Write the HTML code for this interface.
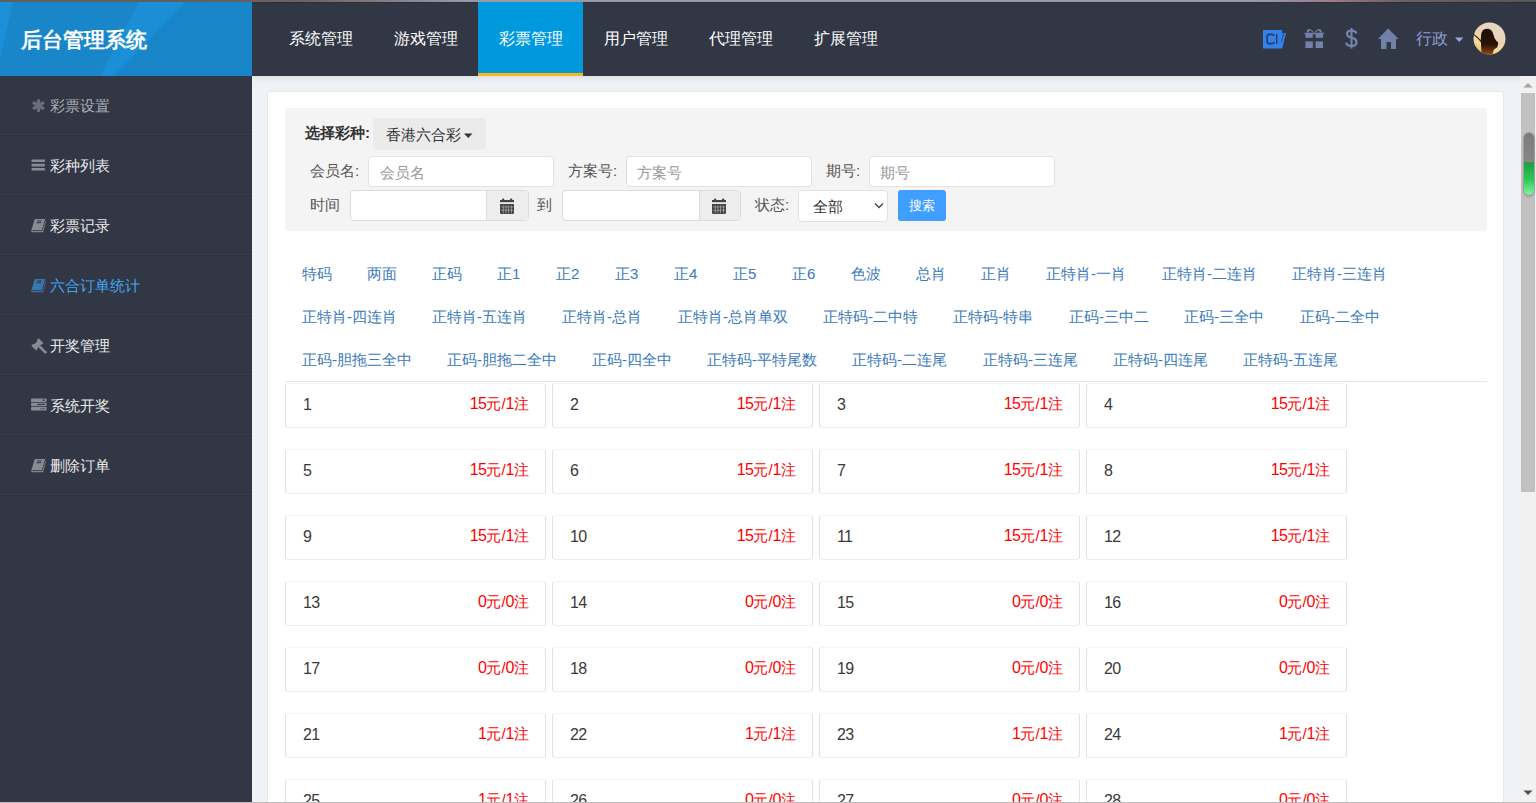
<!DOCTYPE html><html><head><meta charset="utf-8">
<style>
*{box-sizing:border-box;margin:0;padding:0}
html,body{width:1536px;height:803px;overflow:hidden}
body{position:relative;font-family:"Liberation Sans",sans-serif;background:#eff2f7;color:#333}
.abs{position:absolute}
#topline{left:0;top:0;width:1536px;height:2px;background:linear-gradient(90deg,#5f5f5f 0%,#5f5f5f 13%,#6e6262 20%,#9599a8 30%,#9599a8 82%,#a07888 87%,#6c6064 91%,#575757 100%)}
#header{left:0;top:2px;width:1536px;height:74px;background:#323745;box-shadow:inset 0 1px 0 #2c303d}
#logo{left:0;top:2px;width:252px;height:74px;background:#1986c9}
#logo span{position:absolute;left:21px;top:23px;font-size:21px;font-weight:bold;color:#fff;line-height:30px}
.nav{top:2px;height:74px;width:105px;text-align:center;color:#fff;font-size:16px;line-height:72px;padding-top:1px}
.nav.on{background:#0099dd;border-bottom:3px solid #fdb51c}
#sidebar{left:0;top:76px;width:252px;height:727px;background:#323745}
.si{left:0;width:252px;height:60px;border-bottom:1px solid #2c303c;box-shadow:inset 0 -1px 0 #3a3f4d}
.si .t{position:absolute;left:50px;top:20px;font-size:15px;line-height:20px;color:#eee}
.si .ic{position:absolute;left:31px;top:23px;width:15px;height:15px}
#content{left:252px;top:76px;width:1268px;height:727px;background:#eff2f7;overflow:hidden}
#shadow{left:252px;top:76px;width:1268px;height:6px;background:linear-gradient(#dfe2e7,rgba(239,242,247,0))}
#card{left:267px;top:91px;width:1237px;height:760px;background:#fff;border:1px solid #e3e6ea;border-radius:3px}
#filter{left:285px;top:108px;width:1202px;height:123px;background:#f4f4f4;border-radius:4px}
.lbl{font-size:15px;color:#555;line-height:20px}
.inp{background:#fff;border:1px solid #e2e2e2;border-radius:4px;height:31px}
.ph{font-size:15px;color:#999;line-height:20px}
.tab{font-size:15px;color:#3a79bb;line-height:20px;white-space:nowrap}
#hr{left:285px;top:381px;width:1202px;height:1px;background:#e6e6e6}
.cell{width:261px;height:45px;background:#fff;border:1px solid;border-color:#f4f4f4 #e1e1e1 #ededed #e1e1e1;border-radius:3px}
.cell .n{position:absolute;left:17px;top:11px;font-size:16px;letter-spacing:-0.7px;color:#3a3a3a;line-height:20px}
.cell .p i{font-style:normal;font-size:16px;letter-spacing:-0.5px}
.cell .p{position:absolute;right:16px;top:10px;font-size:15px;color:#f00;line-height:20px}
#sb{left:1520px;top:76px;width:16px;height:727px;background:#f1f1f1}
#thumb{left:1521px;top:93px;width:14px;height:399px;background:#c1c1c1}
#botline{left:0;top:802px;width:1536px;height:1px;background:#bcbcbc}
</style></head><body>
<div id="topline" class="abs"></div>
<div id="header" class="abs"></div>
<div id="logo" class="abs"><svg width="252" height="74" style="position:absolute;left:0;top:0"><rect width="252" height="74" fill="#1986c9"></rect><polygon points="0,0 13,0 0,58" fill="#1a90d6"></polygon><polygon points="139,0 186,0 114,74 100,74" fill="#1a8fd5"></polygon><polygon points="186,0 252,0 252,74 114,74" fill="#1885c8"></polygon></svg><span style="width: 126px; white-space: nowrap; text-align-last: justify; text-align: justify;">后台管理系统</span></div>
<div class="abs nav" style="left:268px"><span class="jt" style="display: inline-block; width: 64px; white-space: nowrap; text-align-last: justify; text-align: justify;">系统管理</span></div>
<div class="abs nav" style="left:373px"><span class="jt" style="display: inline-block; width: 64px; white-space: nowrap; text-align-last: justify; text-align: justify;">游戏管理</span></div>
<div class="abs nav on" style="left:478px"><span class="jt" style="display: inline-block; width: 64px; white-space: nowrap; text-align-last: justify; text-align: justify;">彩票管理</span></div>
<div class="abs nav" style="left:583px"><span class="jt" style="display: inline-block; width: 64px; white-space: nowrap; text-align-last: justify; text-align: justify;">用户管理</span></div>
<div class="abs nav" style="left:688px"><span class="jt" style="display: inline-block; width: 64px; white-space: nowrap; text-align-last: justify; text-align: justify;">代理管理</span></div>
<div class="abs nav" style="left:793px"><span class="jt" style="display: inline-block; width: 64px; white-space: nowrap; text-align-last: justify; text-align: justify;">扩展管理</span></div>

<div id="sidebar" class="abs"></div>
<div id="content" class="abs"></div>
<div class="abs si" style="top:76px"><svg class="abs" style="left:31px;top:22px" width="15" height="15" viewBox="0 0 15 15"><g stroke="#6b6f7b" stroke-width="3.3" stroke-linecap="round"><line x1="7.5" y1="2.6" x2="7.5" y2="12.6"></line><line x1="3.2" y1="5.1" x2="11.8" y2="10.1"></line><line x1="3.2" y1="10.1" x2="11.8" y2="5.1"></line></g></svg><span class="t" style="color: rgb(169, 172, 180); width: 60px; white-space: nowrap; text-align-last: justify; text-align: justify;">彩票设置</span></div>
<div class="abs si" style="top:136px"><svg class="abs" style="left:31px;top:23px" width="15" height="13" viewBox="0 0 15 13"><g fill="#888b94"><rect x="0.5" y="0.5" width="13.5" height="2.6" rx="0.8"></rect><rect x="0.5" y="4.8" width="13.5" height="2.6" rx="0.8"></rect><rect x="0.5" y="9" width="13.5" height="2.6" rx="0.8"></rect></g></svg><span class="t" style="color: rgb(233, 233, 234); width: 60px; white-space: nowrap; text-align-last: justify; text-align: justify;">彩种列表</span></div>
<div class="abs si" style="top:196px"><svg class="abs" style="left:31px;top:22px" width="16" height="16" viewBox="0 0 16 16"><path fill="#888b94" d="M4.6 0.9 H13.4 Q14.2 0.9 14 1.8 L13.9 2.6 L14.9 3.2 L12.4 13.6 Q12.2 14.3 11.6 14.3 H1.4 Q0 14.1 0.3 12.6 L3.4 1.9 Q3.7 0.9 4.6 0.9 Z"></path><path d="M1.4 12.6 H11.3 M13.9 2.6 L11.3 12.6" stroke="#323745" stroke-width="0.9" fill="none"></path><path d="M5.9 2.9 H10.6 M5.5 4.7 H10.2" stroke="#323745" stroke-width="1" fill="none"></path></svg><span class="t" style="color: rgb(233, 233, 234); width: 60px; white-space: nowrap; text-align-last: justify; text-align: justify;">彩票记录</span></div>
<div class="abs si" style="top:256px"><svg class="abs" style="left:31px;top:22px" width="16" height="16" viewBox="0 0 16 16"><path fill="#3878ad" d="M4.6 0.9 H13.4 Q14.2 0.9 14 1.8 L13.9 2.6 L14.9 3.2 L12.4 13.6 Q12.2 14.3 11.6 14.3 H1.4 Q0 14.1 0.3 12.6 L3.4 1.9 Q3.7 0.9 4.6 0.9 Z"></path><path d="M1.4 12.6 H11.3 M13.9 2.6 L11.3 12.6" stroke="#323745" stroke-width="0.9" fill="none"></path><path d="M5.9 2.9 H10.6 M5.5 4.7 H10.2" stroke="#323745" stroke-width="1" fill="none"></path></svg><span class="t" style="color: rgb(63, 166, 240); width: 90px; white-space: nowrap; text-align-last: justify; text-align: justify;">六合订单统计</span></div>
<div class="abs si" style="top:316px"><svg class="abs" style="left:31px;top:22px" width="16" height="16" viewBox="0 0 16 16"><g fill="#888b94" transform="rotate(-45 6.4 6.4)"><path d="M1.2 3 H3.2 Q3.6 4.1 6.4 4.1 Q9.2 4.1 9.6 3 H11.6 V9.8 H9.6 Q9.2 8.7 6.4 8.7 Q3.6 8.7 3.2 9.8 H1.2 Z"></path><rect x="5.1" y="8.4" width="2.7" height="10.5" rx="1.2"></rect></g></svg><span class="t" style="color: rgb(233, 233, 234); width: 60px; white-space: nowrap; text-align-last: justify; text-align: justify;">开奖管理</span></div>
<div class="abs si" style="top:376px"><svg class="abs" style="left:31px;top:22px" width="16" height="14" viewBox="0 0 16 14"><g fill="#888b94"><rect x="0" y="0.4" width="15.6" height="3.6" rx="0.8"></rect><rect x="0" y="4.7" width="15.6" height="3.5" rx="0.8"></rect><rect x="0" y="8.9" width="15.6" height="3.6" rx="0.8"></rect></g><g fill="#323745"><rect x="11.3" y="1.6" width="2.7" height="1.1"></rect><rect x="6.2" y="5.9" width="7.8" height="1.1"></rect><rect x="9.3" y="10.1" width="4.7" height="1.1" opacity="0.55"></rect></g></svg><span class="t" style="color: rgb(233, 233, 234); width: 60px; white-space: nowrap; text-align-last: justify; text-align: justify;">系统开奖</span></div>
<div class="abs si" style="top:436px"><svg class="abs" style="left:31px;top:22px" width="16" height="16" viewBox="0 0 16 16"><path fill="#888b94" d="M4.6 0.9 H13.4 Q14.2 0.9 14 1.8 L13.9 2.6 L14.9 3.2 L12.4 13.6 Q12.2 14.3 11.6 14.3 H1.4 Q0 14.1 0.3 12.6 L3.4 1.9 Q3.7 0.9 4.6 0.9 Z"></path><path d="M1.4 12.6 H11.3 M13.9 2.6 L11.3 12.6" stroke="#323745" stroke-width="0.9" fill="none"></path><path d="M5.9 2.9 H10.6 M5.5 4.7 H10.2" stroke="#323745" stroke-width="1" fill="none"></path></svg><span class="t" style="color: rgb(233, 233, 234); width: 60px; white-space: nowrap; text-align-last: justify; text-align: justify;">删除订单</span></div>
<div id="shadow" class="abs"></div>
<div id="card" class="abs"></div>
<div id="filter" class="abs"></div>

<div class="abs lbl" style="left: 305px; top: 123px; font-weight: bold; color: rgb(51, 51, 51); width: 65px; white-space: nowrap; text-align-last: justify; text-align: justify;">选择彩种:</div>
<div class="abs" style="left:373px;top:118px;width:113px;height:32px;background:#ebebeb;border-radius:4px"></div>
<div class="abs lbl" style="left: 386px; top: 125px; color: rgb(51, 51, 51); width: 75px; white-space: nowrap; text-align-last: justify; text-align: justify;">香港六合彩</div>
<svg class="abs" style="left:464px;top:133px" width="9" height="6" viewBox="0 0 9 6"><path d="M0 0.5 L8.5 0.5 L4.25 5 Z" fill="#333"></path></svg>
<div class="abs lbl" style="left: 310px; top: 161px; width: 49.17px; white-space: nowrap; text-align-last: justify; text-align: justify;">会员名:</div>
<div class="abs inp" style="left:368px;top:156px;width:186px"></div>
<div class="abs ph" style="left: 380px; top: 163px; width: 45px; white-space: nowrap; text-align-last: justify; text-align: justify;">会员名</div>
<div class="abs lbl" style="left: 568px; top: 161px; width: 49.17px; white-space: nowrap; text-align-last: justify; text-align: justify;">方案号:</div>
<div class="abs inp" style="left:626px;top:156px;width:186px"></div>
<div class="abs ph" style="left: 637px; top: 163px; width: 45px; white-space: nowrap; text-align-last: justify; text-align: justify;">方案号</div>
<div class="abs lbl" style="left: 826px; top: 161px; width: 34.17px; white-space: nowrap; text-align-last: justify; text-align: justify;">期号:</div>
<div class="abs inp" style="left:869px;top:156px;width:186px"></div>
<div class="abs ph" style="left: 880px; top: 163px; width: 30px; white-space: nowrap; text-align-last: justify; text-align: justify;">期号</div>
<div class="abs lbl" style="left: 310px; top: 195px; width: 30px; white-space: nowrap; text-align-last: justify; text-align: justify;">时间</div>
<div class="abs inp" style="left:350px;top:190px;width:179px;border-color:#dcdcdc"></div>
<div class="abs" style="left:486px;top:191px;width:42px;height:29px;background:#ededed;border-left:1px solid #dcdcdc;border-radius:0 3px 3px 0"></div>
<svg class="abs" style="left:500px;top:198px" width="15" height="17" viewBox="0 0 15 17"><rect x="2" y="0.4" width="2.2" height="2.6" rx="0.8" fill="#444"></rect><rect x="10" y="0.4" width="2.2" height="2.6" rx="0.8" fill="#444"></rect><rect x="0" y="2" width="14" height="2.2" fill="#444"></rect><path d="M0 6 H14 V14.8 Q14 16 12.8 16 H1.2 Q0 16 0 14.8 Z" fill="#454545"></path><g fill="#a9a9a9"><rect x="0.8" y="8.6" width="12.4" height="0.7"></rect><rect x="0.8" y="11.8" width="12.4" height="0.7"></rect><rect x="2.9" y="7.4" width="0.7" height="8"></rect><rect x="5.6" y="7.4" width="0.7" height="8"></rect><rect x="8.3" y="7.4" width="0.7" height="8"></rect><rect x="11" y="7.4" width="0.7" height="8"></rect></g></svg>
<div class="abs lbl" style="left: 537px; top: 195px; width: 15px; white-space: nowrap; text-align-last: justify; text-align: justify;">到</div>
<div class="abs inp" style="left:562px;top:190px;width:179px;border-color:#dcdcdc"></div>
<div class="abs" style="left:699px;top:191px;width:41px;height:29px;background:#ededed;border-left:1px solid #dcdcdc;border-radius:0 3px 3px 0"></div>
<svg class="abs" style="left:712px;top:198px" width="15" height="17" viewBox="0 0 15 17"><rect x="2" y="0.4" width="2.2" height="2.6" rx="0.8" fill="#444"></rect><rect x="10" y="0.4" width="2.2" height="2.6" rx="0.8" fill="#444"></rect><rect x="0" y="2" width="14" height="2.2" fill="#444"></rect><path d="M0 6 H14 V14.8 Q14 16 12.8 16 H1.2 Q0 16 0 14.8 Z" fill="#454545"></path><g fill="#a9a9a9"><rect x="0.8" y="8.6" width="12.4" height="0.7"></rect><rect x="0.8" y="11.8" width="12.4" height="0.7"></rect><rect x="2.9" y="7.4" width="0.7" height="8"></rect><rect x="5.6" y="7.4" width="0.7" height="8"></rect><rect x="8.3" y="7.4" width="0.7" height="8"></rect><rect x="11" y="7.4" width="0.7" height="8"></rect></g></svg>
<div class="abs lbl" style="left: 755px; top: 195px; width: 34.17px; white-space: nowrap; text-align-last: justify; text-align: justify;">状态:</div>
<div class="abs inp" style="left:798px;top:190px;width:90px;height:32px"></div>
<div class="abs lbl" style="left: 813px; top: 197px; color: rgb(51, 51, 51); width: 30px; white-space: nowrap; text-align-last: justify; text-align: justify;">全部</div>
<svg class="abs" style="left:874px;top:202px" width="10" height="8" viewBox="0 0 10 8"><path d="M1 1.5 L5 5.5 L9 1.5" stroke="#444" stroke-width="1.3" fill="none"></path></svg>
<div class="abs" style="left:898px;top:190px;width:48px;height:31px;background:#409eff;border-radius:3px;color:#fff;font-size:13px;line-height:31px;text-align:center"><span class="jt" style="display: inline-block; width: 26px; white-space: nowrap; text-align-last: justify; text-align: justify;">搜索</span></div>
<div class="abs tab" style="left: 302px; top: 264px; width: 30px; white-space: nowrap; text-align-last: justify; text-align: justify;">特码</div>
<div class="abs tab" style="left: 367px; top: 264px; width: 30px; white-space: nowrap; text-align-last: justify; text-align: justify;">两面</div>
<div class="abs tab" style="left: 432px; top: 264px; width: 30px; white-space: nowrap; text-align-last: justify; text-align: justify;">正码</div>
<div class="abs tab" style="left: 497px; top: 264px; width: 23.34px; white-space: nowrap; text-align-last: justify; text-align: justify;">正1</div>
<div class="abs tab" style="left: 556px; top: 264px; width: 23.34px; white-space: nowrap; text-align-last: justify; text-align: justify;">正2</div>
<div class="abs tab" style="left: 615px; top: 264px; width: 23.34px; white-space: nowrap; text-align-last: justify; text-align: justify;">正3</div>
<div class="abs tab" style="left: 674px; top: 264px; width: 23.34px; white-space: nowrap; text-align-last: justify; text-align: justify;">正4</div>
<div class="abs tab" style="left: 733px; top: 264px; width: 23.34px; white-space: nowrap; text-align-last: justify; text-align: justify;">正5</div>
<div class="abs tab" style="left: 792px; top: 264px; width: 23.34px; white-space: nowrap; text-align-last: justify; text-align: justify;">正6</div>
<div class="abs tab" style="left: 851px; top: 264px; width: 30px; white-space: nowrap; text-align-last: justify; text-align: justify;">色波</div>
<div class="abs tab" style="left: 916px; top: 264px; width: 30px; white-space: nowrap; text-align-last: justify; text-align: justify;">总肖</div>
<div class="abs tab" style="left: 981px; top: 264px; width: 30px; white-space: nowrap; text-align-last: justify; text-align: justify;">正肖</div>
<div class="abs tab" style="left: 1046px; top: 264px; width: 80px; white-space: nowrap; text-align-last: justify; text-align: justify;">正特肖-一肖</div>
<div class="abs tab" style="left: 1162px; top: 264px; width: 95px; white-space: nowrap; text-align-last: justify; text-align: justify;">正特肖-二连肖</div>
<div class="abs tab" style="left: 1292px; top: 264px; width: 95px; white-space: nowrap; text-align-last: justify; text-align: justify;">正特肖-三连肖</div>
<div class="abs tab" style="left: 302px; top: 307px; width: 95px; white-space: nowrap; text-align-last: justify; text-align: justify;">正特肖-四连肖</div>
<div class="abs tab" style="left: 432px; top: 307px; width: 95px; white-space: nowrap; text-align-last: justify; text-align: justify;">正特肖-五连肖</div>
<div class="abs tab" style="left: 562px; top: 307px; width: 80px; white-space: nowrap; text-align-last: justify; text-align: justify;">正特肖-总肖</div>
<div class="abs tab" style="left: 678px; top: 307px; width: 110px; white-space: nowrap; text-align-last: justify; text-align: justify;">正特肖-总肖单双</div>
<div class="abs tab" style="left: 823px; top: 307px; width: 95px; white-space: nowrap; text-align-last: justify; text-align: justify;">正特码-二中特</div>
<div class="abs tab" style="left: 953px; top: 307px; width: 80px; white-space: nowrap; text-align-last: justify; text-align: justify;">正特码-特串</div>
<div class="abs tab" style="left: 1069px; top: 307px; width: 80px; white-space: nowrap; text-align-last: justify; text-align: justify;">正码-三中二</div>
<div class="abs tab" style="left: 1184px; top: 307px; width: 80px; white-space: nowrap; text-align-last: justify; text-align: justify;">正码-三全中</div>
<div class="abs tab" style="left: 1300px; top: 307px; width: 80px; white-space: nowrap; text-align-last: justify; text-align: justify;">正码-二全中</div>
<div class="abs tab" style="left: 302px; top: 350px; width: 110px; white-space: nowrap; text-align-last: justify; text-align: justify;">正码-胆拖三全中</div>
<div class="abs tab" style="left: 447px; top: 350px; width: 110px; white-space: nowrap; text-align-last: justify; text-align: justify;">正码-胆拖二全中</div>
<div class="abs tab" style="left: 592px; top: 350px; width: 80px; white-space: nowrap; text-align-last: justify; text-align: justify;">正码-四全中</div>
<div class="abs tab" style="left: 707px; top: 350px; width: 110px; white-space: nowrap; text-align-last: justify; text-align: justify;">正特码-平特尾数</div>
<div class="abs tab" style="left: 852px; top: 350px; width: 95px; white-space: nowrap; text-align-last: justify; text-align: justify;">正特码-二连尾</div>
<div class="abs tab" style="left: 983px; top: 350px; width: 95px; white-space: nowrap; text-align-last: justify; text-align: justify;">正特码-三连尾</div>
<div class="abs tab" style="left: 1113px; top: 350px; width: 95px; white-space: nowrap; text-align-last: justify; text-align: justify;">正特码-四连尾</div>
<div class="abs tab" style="left: 1243px; top: 350px; width: 95px; white-space: nowrap; text-align-last: justify; text-align: justify;">正特码-五连尾</div>
<div class="abs cell" style="left:285px;top:383px"><span class="n">1</span><span class="p" style="width: 59.38px; white-space: nowrap; text-align-last: justify; text-align: justify;"><i>15</i>元/<i>1</i>注</span></div>
<div class="abs cell" style="left:552px;top:383px"><span class="n">2</span><span class="p" style="width: 59.38px; white-space: nowrap; text-align-last: justify; text-align: justify;"><i>15</i>元/<i>1</i>注</span></div>
<div class="abs cell" style="left:819px;top:383px"><span class="n">3</span><span class="p" style="width: 59.38px; white-space: nowrap; text-align-last: justify; text-align: justify;"><i>15</i>元/<i>1</i>注</span></div>
<div class="abs cell" style="left:1086px;top:383px"><span class="n">4</span><span class="p" style="width: 59.38px; white-space: nowrap; text-align-last: justify; text-align: justify;"><i>15</i>元/<i>1</i>注</span></div>
<div class="abs cell" style="left:285px;top:449px"><span class="n">5</span><span class="p" style="width: 59.38px; white-space: nowrap; text-align-last: justify; text-align: justify;"><i>15</i>元/<i>1</i>注</span></div>
<div class="abs cell" style="left:552px;top:449px"><span class="n">6</span><span class="p" style="width: 59.38px; white-space: nowrap; text-align-last: justify; text-align: justify;"><i>15</i>元/<i>1</i>注</span></div>
<div class="abs cell" style="left:819px;top:449px"><span class="n">7</span><span class="p" style="width: 59.38px; white-space: nowrap; text-align-last: justify; text-align: justify;"><i>15</i>元/<i>1</i>注</span></div>
<div class="abs cell" style="left:1086px;top:449px"><span class="n">8</span><span class="p" style="width: 59.38px; white-space: nowrap; text-align-last: justify; text-align: justify;"><i>15</i>元/<i>1</i>注</span></div>
<div class="abs cell" style="left:285px;top:515px"><span class="n">9</span><span class="p" style="width: 59.38px; white-space: nowrap; text-align-last: justify; text-align: justify;"><i>15</i>元/<i>1</i>注</span></div>
<div class="abs cell" style="left:552px;top:515px"><span class="n">10</span><span class="p" style="width: 59.38px; white-space: nowrap; text-align-last: justify; text-align: justify;"><i>15</i>元/<i>1</i>注</span></div>
<div class="abs cell" style="left:819px;top:515px"><span class="n">11</span><span class="p" style="width: 59.38px; white-space: nowrap; text-align-last: justify; text-align: justify;"><i>15</i>元/<i>1</i>注</span></div>
<div class="abs cell" style="left:1086px;top:515px"><span class="n">12</span><span class="p" style="width: 59.38px; white-space: nowrap; text-align-last: justify; text-align: justify;"><i>15</i>元/<i>1</i>注</span></div>
<div class="abs cell" style="left:285px;top:581px"><span class="n">13</span><span class="p" style="width: 50.98px; white-space: nowrap; text-align-last: justify; text-align: justify;"><i>0</i>元/<i>0</i>注</span></div>
<div class="abs cell" style="left:552px;top:581px"><span class="n">14</span><span class="p" style="width: 50.98px; white-space: nowrap; text-align-last: justify; text-align: justify;"><i>0</i>元/<i>0</i>注</span></div>
<div class="abs cell" style="left:819px;top:581px"><span class="n">15</span><span class="p" style="width: 50.98px; white-space: nowrap; text-align-last: justify; text-align: justify;"><i>0</i>元/<i>0</i>注</span></div>
<div class="abs cell" style="left:1086px;top:581px"><span class="n">16</span><span class="p" style="width: 50.98px; white-space: nowrap; text-align-last: justify; text-align: justify;"><i>0</i>元/<i>0</i>注</span></div>
<div class="abs cell" style="left:285px;top:647px"><span class="n">17</span><span class="p" style="width: 50.98px; white-space: nowrap; text-align-last: justify; text-align: justify;"><i>0</i>元/<i>0</i>注</span></div>
<div class="abs cell" style="left:552px;top:647px"><span class="n">18</span><span class="p" style="width: 50.98px; white-space: nowrap; text-align-last: justify; text-align: justify;"><i>0</i>元/<i>0</i>注</span></div>
<div class="abs cell" style="left:819px;top:647px"><span class="n">19</span><span class="p" style="width: 50.98px; white-space: nowrap; text-align-last: justify; text-align: justify;"><i>0</i>元/<i>0</i>注</span></div>
<div class="abs cell" style="left:1086px;top:647px"><span class="n">20</span><span class="p" style="width: 50.98px; white-space: nowrap; text-align-last: justify; text-align: justify;"><i>0</i>元/<i>0</i>注</span></div>
<div class="abs cell" style="left:285px;top:713px"><span class="n">21</span><span class="p" style="width: 50.98px; white-space: nowrap; text-align-last: justify; text-align: justify;"><i>1</i>元/<i>1</i>注</span></div>
<div class="abs cell" style="left:552px;top:713px"><span class="n">22</span><span class="p" style="width: 50.98px; white-space: nowrap; text-align-last: justify; text-align: justify;"><i>1</i>元/<i>1</i>注</span></div>
<div class="abs cell" style="left:819px;top:713px"><span class="n">23</span><span class="p" style="width: 50.98px; white-space: nowrap; text-align-last: justify; text-align: justify;"><i>1</i>元/<i>1</i>注</span></div>
<div class="abs cell" style="left:1086px;top:713px"><span class="n">24</span><span class="p" style="width: 50.98px; white-space: nowrap; text-align-last: justify; text-align: justify;"><i>1</i>元/<i>1</i>注</span></div>
<div class="abs cell" style="left:285px;top:779px"><span class="n">25</span><span class="p" style="width: 50.98px; white-space: nowrap; text-align-last: justify; text-align: justify;"><i>1</i>元/<i>1</i>注</span></div>
<div class="abs cell" style="left:552px;top:779px"><span class="n">26</span><span class="p" style="width: 50.98px; white-space: nowrap; text-align-last: justify; text-align: justify;"><i>0</i>元/<i>0</i>注</span></div>
<div class="abs cell" style="left:819px;top:779px"><span class="n">27</span><span class="p" style="width: 50.98px; white-space: nowrap; text-align-last: justify; text-align: justify;"><i>0</i>元/<i>0</i>注</span></div>
<div class="abs cell" style="left:1086px;top:779px"><span class="n">28</span><span class="p" style="width: 50.98px; white-space: nowrap; text-align-last: justify; text-align: justify;"><i>0</i>元/<i>0</i>注</span></div>
<div id="hr" class="abs"></div>
<div id="sb" class="abs"></div>
<div id="thumb" class="abs"></div>
<svg class="abs" style="left:1262px;top:29px" width="26" height="21" viewBox="0 0 26 21">
<path d="M1 1 H20 V3.9 H24 L20.3 19.4 H1 Z" fill="#3282ea"></path>
<path d="M21.6 4.2 L19.6 12.5" stroke="#2a3f78" stroke-width="0.9"></path>
<path d="M12.3 7 Q11.8 5.4 9.8 5.4 H7.2 Q5.1 5.4 5.1 8 V12 Q5.1 14.6 7.2 14.6 H9.8 Q11.8 14.6 12.3 13" stroke="#2c3a66" stroke-width="1.6" fill="none"></path>
<rect x="14" y="5" width="1.4" height="10" fill="#2c3a66"></rect>
</svg>
<svg class="abs" style="left:1304px;top:28px" width="21" height="21" viewBox="0 0 21 21">
<g fill="#7480a8">
<path d="M2.8 4.6 Q2.8 1.2 5 1 Q6.8 1 10.2 4.4 Q13.6 1 15.4 1 Q17.7 1.2 17.7 4.6 Z M5.1 4.6 L9.3 4.6 Q6.5 2.2 5.5 2.4 Q4.6 2.7 5.1 4.6 Z M15.4 4.6 Q15.9 2.7 15 2.4 Q14 2.2 11.1 4.6 Z" fill-rule="evenodd"></path>
<rect x="0.5" y="4.8" width="19.5" height="1.4"></rect>
<rect x="1.4" y="5.6" width="7.4" height="4.2"></rect>
<rect x="11.6" y="5.6" width="7.4" height="4.2"></rect>
<rect x="1.4" y="13.4" width="7.4" height="6.6"></rect>
<rect x="11.6" y="13.4" width="7.4" height="6.6"></rect>
</g></svg>
<svg class="abs" style="left:1344px;top:27px" width="15" height="22" viewBox="0 0 15 22">
<path d="M12.4 6.4 Q11.6 3.7 7.5 3.6 Q3 3.6 3 7 Q3 9.4 7.5 10.6 Q12.4 11.8 12.5 15.2 Q12.4 18.9 7.5 19 Q2.8 19 2.2 15.6" stroke="#7483ad" stroke-width="2.3" fill="none"></path>
<rect x="6.5" y="1" width="2" height="20.6" fill="#7483ad"></rect>
</svg>
<svg class="abs" style="left:1377px;top:28px" width="23" height="22" viewBox="0 0 23 22">
<path d="M11.2 0.6 L21.6 11 L19 11 L19 20.9 L14 20.9 L14 14.1 L9.5 14.1 L9.5 20.9 L4 20.9 L4 11 L1 11 Z" fill="#7381a9"></path>
</svg>
<div id="user" class="abs" style="left: 1416px; top: 28px; font-size: 16px; line-height: 21px; color: rgb(141, 157, 210); width: 32px; white-space: nowrap; text-align-last: justify; text-align: justify;">行政</div>
<svg class="abs" style="left:1455px;top:37px" width="9" height="6" viewBox="0 0 9 6"><path d="M0 0.6 L8.4 0.6 L4.2 5 Z" fill="#99a6dc"></path></svg>
<svg class="abs" style="left:1473px;top:22px" width="33" height="33" viewBox="0 0 33 33">
<defs><linearGradient id="av" x1="0.8" y1="0" x2="0.2" y2="1"><stop offset="0" stop-color="#e4d9cd"></stop><stop offset="0.45" stop-color="#ebd3b2"></stop><stop offset="0.75" stop-color="#f1dc96"></stop><stop offset="1" stop-color="#e7b45a"></stop></linearGradient>
<linearGradient id="bd" x1="0" y1="0" x2="0" y2="1"><stop offset="0" stop-color="#1e0f08"></stop><stop offset="0.6" stop-color="#2a1308"></stop><stop offset="1" stop-color="#9a4a12"></stop></linearGradient>
<clipPath id="avc"><circle cx="16.5" cy="16.5" r="16"></circle></clipPath></defs>
<circle cx="16.5" cy="16.5" r="16" fill="url(#av)"></circle>
<g clip-path="url(#avc)">
<path d="M8.6 33 L8 22 Q7.5 18 8 14 Q8.2 9.5 10.5 7.8 Q13 6.4 15.5 6.8 Q18.5 7.5 19.5 10 Q20.5 13 21.5 16 Q23.5 19.5 25.3 20.8 Q24.8 23.5 24.3 25.3 Q22.5 26.8 21 27.4 L19.2 33 Z" fill="url(#bd)"></path>
<path d="M8.4 18.8 Q4.5 14.5 0.8 12 L1.2 13.6 Q4.6 16.2 8.2 20.6 Z" fill="#2a160c"></path>
</g></svg>
<svg class="abs" style="left:1522px;top:81px" width="12" height="8" viewBox="0 0 12 8"><path d="M1.5 6.5 L6 2 L10.5 6.5 Z" fill="#a3a3a3"></path></svg>
<svg class="abs" style="left:1522px;top:789px" width="12" height="8" viewBox="0 0 12 8"><path d="M1.5 1.5 L6 6 L10.5 1.5 Z" fill="#505050"></path></svg>
<div class="abs" style="left:1524px;top:133px;width:10px;height:62px;border-radius:5px;background:linear-gradient(#7b7b7b 0%,#878787 46%,#1f9e45 48%,#2cc856 75%,#84f39e 100%);box-shadow:0 0 0 1px #9c9c9c, 0 2px 3px rgba(0,0,0,0.2)"></div>
<div id="botline" class="abs"></div>

</body></html>
